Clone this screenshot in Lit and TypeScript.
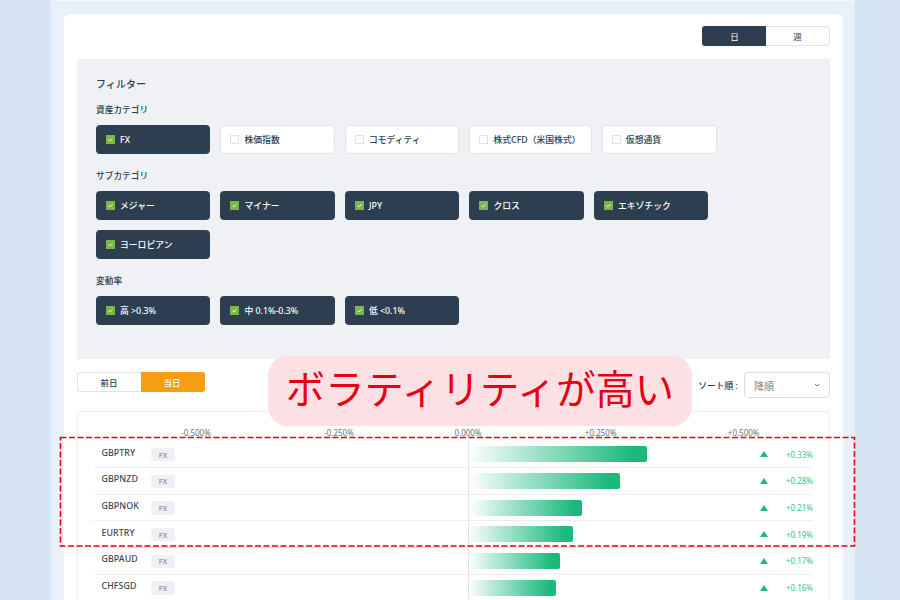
import { LitElement, html, css, svg } from "lit";
import { customElement } from "lit/decorators.js";

const check = svg`<svg viewBox="0 0 9 9" width="9" height="9" aria-hidden="true"><rect width="9" height="9" fill="#7ab648"/><path d="M2.6 4.7 L3.9 5.9 L6.4 3.4" fill="none" stroke="#fff" stroke-width="1"/></svg>`;

const groups = [
  { label: "資産カテゴリ", items: [["FX", 1, 114.3], ["株価指数", 0, 114.3], ["コモディティ", 0, 114.3], ["株式CFD（米国株式）", 0, 122.2], ["仮想通貨", 0, 115]] },
  { label: "サブカテゴリ", items: [["メジャー", 1, 114.3], ["マイナー", 1, 114.3], ["JPY", 1, 114.3], ["クロス", 1, 114.3], ["エキゾチック", 1, 114.3], ["ヨーロピアン", 1, 114.3]] },
  { label: "変動率", items: [["高 >0.3%", 1, 114.3], ["中 0.1%-0.3%", 1, 114.3], ["低 <0.1%", 1, 114.3]] },
] as const;

const rows = [
  ["GBPTRY", 3, 175, "+0.33%"],
  ["GBPNZD", 3, 148, "+0.28%"],
  ["GBPNOK", 3, 110, "+0.21%"],
  ["EURTRY", 1, 103, "+0.19%"],
  ["GBPAUD", 1, 90, "+0.17%"],
  ["CHFSGD", 1, 86, "+0.16%"],
] as const;

@customElement("app-root")
export class AppRoot extends LitElement {
  static styles = css`
    :host {
      display: block;
      width: 900px;
      height: 600px;
      overflow: hidden;
      position: relative;
      font-family: "Noto Sans", "Noto Sans CJK JP", sans-serif;
      color: #2c3e50;
      background: #d5e5f4;
    }
    .mid {
      box-sizing: border-box;
      margin-left: 51px;
      width: 804px;
      height: 600px;
      padding: 13px 12px 0 13px;
      background: #e8f1f9;
      border-top: 1px solid #f4f8fc;
    }
    .card {
      box-sizing: border-box;
      height: 620px;
      background: #fff;
      border-radius: 6px 6px 0 0;
      padding: 12px 13px 0 12.5px;
    }
    .top { display: flex; justify-content: flex-end; height: 20px; margin-bottom: 12.5px; }
    .seg { display: flex; width: 128px; font-size: 8.5px; }
    .seg span {
      flex: 1;
      box-sizing: border-box;
      display: flex;
      align-items: center;
      justify-content: center;
      background: #fff;
      border: 1px solid #dfe2e7;
    }
    .seg span:first-child { border-radius: 3px 0 0 3px; border-right: none; }
    .seg span:last-child { border-radius: 0 3px 3px 0; border-left: none; }
    .seg .on { background: #2c3e50; border-color: #2c3e50; color: #fff; }
    .seg.a { height: 20px; }
    .panel {
      box-sizing: border-box;
      height: 300.5px;
      background: #f0f1f5;
      padding: 18.5px 20px 0 19.5px;
    }
    .title { font-size: 10px; font-weight: 500; line-height: 15px; letter-spacing: 0.05px; margin-bottom: 11px; }
    .glabel { font-size: 8.7px; font-weight: 500; line-height: 14px; margin-bottom: 8.4px; }
    .group { margin-bottom: 15px; }
    .group:first-of-type .glabel { margin-bottom: 9px; }
    .chips { display: flex; flex-wrap: wrap; gap: 10.2px; }
    .chip {
      box-sizing: border-box;
      height: 28.6px;
      display: flex;
      align-items: center;
      gap: 5px;
      padding-left: 9px;
      border: 1px solid #dfe2e7;
      border-radius: 3.5px;
      background: #fff;
      font-size: 8.8px;
      font-weight: 500;
    }
    .chip.on { background: #2c3e50; color: #fff; border-color: #2c3e50; }
    .box { width: 9px; height: 9px; box-sizing: border-box; border: 1px solid #dfe2e7; background: #fff; flex: none; }
    .chip svg { display: block; flex: none; }
    .bar {
      display: flex;
      justify-content: space-between;
      align-items: flex-start;
      height: 26px;
      margin: 13px 0 12.5px;
    }
    .seg.b { height: 19.5px; }
    .seg.b span { font-weight: 500; }
    .seg.b .on { background: #f59e14; border-color: #f59e14; color: #fff; }
    .sort { display: flex; align-items: center; gap: 6px; font-size: 8.8px; font-weight: 500; }
    .select {
      box-sizing: border-box;
      width: 86px;
      height: 26px;
      border: 1px solid #d9dce1;
      border-radius: 3.5px;
      display: flex;
      align-items: center;
      justify-content: space-between;
      padding: 0 9px;
      color: #7a838d;
      font-size: 10px;
      font-weight: 400;
    }
    .select svg { display: block; }
    .table {
      box-sizing: border-box;
      border: 1px solid #eceef1;
      border-radius: 4px;
      height: 260px;
      padding: 0 16px;
    }
    .axis {
      display: grid;
      grid-template-columns: 143px 143px 115px 150.4px 135.6px;
      justify-items: center;
      padding: 15px 0 0 31px;
      height: 29.8px;
      box-sizing: border-box;
      font-size: 8px;
      line-height: 12px;
      color: #6b7480;
    }
    .row {
      box-sizing: border-box;
      height: 26.7px;
      border-bottom: 1px solid #eceef1;
      display: grid;
      grid-template-columns: 49.5px 24px 1fr 52px;
      align-items: center;
      padding-left: 8px;
    }
    .name { font-size: 8.8px; font-weight: 500; letter-spacing: 0.1px; color: #3a4653; padding-bottom: 3px; }
    .pill {
      width: 24px;
      height: 13.5px;
      margin-top: 1px;
      border-radius: 2.5px;
      background: #f0f1f5;
      color: #6b7480;
      font-size: 7.5px;
      display: flex;
      align-items: center;
      justify-content: center;
    }
    .chart {
      height: 100%;
      margin-left: 293px;
      box-sizing: border-box;
      border-left: 1px solid #dfe1e5;
      display: flex;
      align-items: center;
    }
    .fill {
      height: 16px;
      border-radius: 2px;
      background: linear-gradient(to right, rgba(28, 185, 125, 0.03), #1cb97d 92%);
    }
    .res { display: flex; align-items: center; justify-content: space-between; }
    .res svg { display: block; margin-left: -1px; }
    .val { font-size: 8px; color: #35c48c; }
    .callout {
      position: absolute;
      left: 268px;
      top: 356px;
      width: 424px;
      height: 70px;
      box-sizing: border-box;
      padding-bottom: 3px;
      background: #fde0e4;
      border-radius: 20px;
      display: flex;
      align-items: center;
      justify-content: center;
      color: #e60012;
      font-size: 39.3px;
      font-weight: 400;
      line-height: 1;
      white-space: nowrap;
    }
    .dash {
      position: absolute;
      left: 59px;
      top: 436px;
      display: block;
      pointer-events: none;
    }
  `;

  render() {
    return html`
      <div class="mid">
        <div class="card">
          <div class="top">
            <div class="seg a"><span class="on">日</span><span>週</span></div>
          </div>
          <div class="panel">
            <div class="title">フィルター</div>
            ${groups.map(
              (g) => html`
                <div class="group">
                  <div class="glabel">${g.label}</div>
                  <div class="chips">
                    ${g.items.map(
                      ([t, on, w]) => html`
                        <div class="chip ${on ? "on" : ""}" style="width:${w}px">
                          ${on ? check : html`<span class="box"></span>`}<span>${t}</span>
                        </div>
                      `
                    )}
                  </div>
                </div>
              `
            )}
          </div>
          <div class="bar">
            <div class="seg b"><span>前日</span><span class="on">当日</span></div>
            <div class="sort">
              <span>ソート順 :</span>
              <div class="select">
                <span>降順</span>
                <svg width="6" height="4" viewBox="0 0 6 4" aria-hidden="true"><path d="M1 1 L3 3 L5 1" fill="none" stroke="#5f6872" stroke-width="0.9"/></svg>
              </div>
            </div>
          </div>
          <div class="table">
            <div class="axis">
              <span>-0.500%</span><span>-0.250%</span><span>0.000%</span><span>+0.250%</span><span>+0.500%</span>
            </div>
            ${rows.map(
              ([n, off, w, v]) => html`
                <div class="row">
                  <div class="name">${n}</div>
                  <div class="pill">FX</div>
                  <div class="chart">
                    <div class="fill" style="margin-left:${off}px;width:${w}px"></div>
                  </div>
                  <div class="res">
                    <svg width="8" height="6" viewBox="0 0 8 6" aria-hidden="true"><path d="M4 0 L8 6 L0 6 Z" fill="#1cb97d"/></svg>
                    <span class="val">${v}</span>
                  </div>
                </div>
              `
            )}
          </div>
        </div>
      </div>
      <div class="callout">ボラティリティが高い</div>
      <svg class="dash" width="797" height="112" aria-hidden="true">
        <rect x="1.5" y="1.5" width="794" height="108.5" fill="none" stroke="#e60012" stroke-width="1.6" stroke-dasharray="6 2.5"/>
      </svg>
    `;
  }
}
